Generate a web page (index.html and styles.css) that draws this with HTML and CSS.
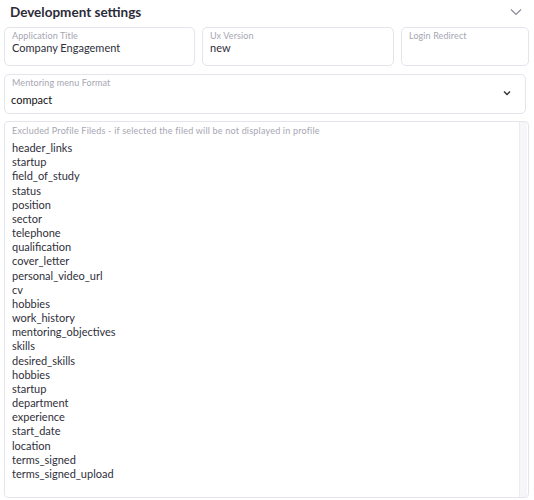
FILE: index.html
```html
<!DOCTYPE html>
<html>
<head>
<meta charset="utf-8">
<link rel="stylesheet" href="styles.css">
</head>
<body>
<div class="panel">
  <div class="header">
    <h2 class="title">Development settings</h2>
    <svg class="chev-lg" width="12" height="8" viewBox="0 0 12 8"><path d="M1 1.5 L6 6.5 L11 1.5" fill="none" stroke="#8a8a96" stroke-width="1.2"/></svg>
  </div>
  <div class="row">
    <div class="field f1"><div class="label">Application Title</div><div class="value">Company Engagement</div></div>
    <div class="field f2"><div class="label">Ux Version</div><div class="value">new</div></div>
    <div class="field f3"><div class="label">Login Redirect</div><div class="value"></div></div>
  </div>
  <div class="field select">
    <div class="sel-main">
      <div class="label">Mentoring menu Format</div>
      <div class="value dark">compact</div>
    </div>
    <svg class="chev-sm" width="8" height="6" viewBox="0 0 8 6"><path d="M1 1.5 L4 4.5 L7 1.5" fill="none" stroke="#333" stroke-width="1.4"/></svg>
  </div>
  <div class="field multi">
    <div class="multi-body">
      <div class="label wide">Excluded Profile Fileds - if selected the filed will be not displayed in profile</div>
      <ul class="list">
        <li>header_links</li>
        <li>startup</li>
        <li>field_of_study</li>
        <li>status</li>
        <li>position</li>
        <li>sector</li>
        <li>telephone</li>
        <li>qualification</li>
        <li>cover_letter</li>
        <li>personal_video_url</li>
        <li>cv</li>
        <li>hobbies</li>
        <li>work_history</li>
        <li>mentoring_objectives</li>
        <li>skills</li>
        <li>desired_skills</li>
        <li>hobbies</li>
        <li>startup</li>
        <li>department</li>
        <li>experience</li>
        <li>start_date</li>
        <li>location</li>
        <li>terms_signed</li>
        <li>terms_signed_upload</li>
      </ul>
    </div>
    <div class="scrollbar"></div>
  </div>
</div>
</body>
</html>
```
FILE: styles.css
```css
html, body {
  margin: 0;
  padding: 0;
  background: #ffffff;
}
body {
  font-family: "Lato", "Noto Sans", sans-serif;
  color: #2f2f3b;
}
.panel {
  width: 534px;
  padding: 0 6px 0 4px;
  box-sizing: border-box;
}
.header {
  display: flex;
  align-items: center;
  justify-content: space-between;
  height: 25px;
  padding: 0 6px 0 6px;
}
.title {
  margin: 0 0 2px 0;
  font-size: 13.5px;
  font-weight: 700;
  color: #2c2c38;
}
.chev-lg {
  margin-top: -1px;
}
.row {
  display: grid;
  grid-template-columns: 191px 192px 128px;
  column-gap: 7px;
  margin-top: 2px;
}
.field {
  border: 1px solid #e4e4ec;
  border-radius: 5px;
  box-sizing: border-box;
  padding: 2px 7px;
}
.row .field {
  height: 39px;
}
.label {
  font-size: 9px;
  color: #a6a6b2;
  line-height: 11px;
  letter-spacing: 0.1px;
}
.label.wide {
  letter-spacing: 0.2px;
}
.value {
  font-size: 11px;
  line-height: 14px;
  color: #2f2f3b;
  margin-top: 0;
}
.value.dark {
  color: #111;
  margin-top: 5px;
}
.select {
  margin-top: 8px;
  width: 522px;
  height: 40px;
  display: flex;
  align-items: center;
  justify-content: space-between;
  padding: 1px 14px 6px 6px;
}
.sel-main .label {
  padding-left: 1px;
}
.chev-sm {
  margin-top: 2px;
}
.multi {
  margin-top: 7px;
  width: 525px;
  height: 377px;
  padding: 0;
  display: flex;
  border-radius: 4px;
}
.multi-body {
  flex: 1;
  padding: 3px 7px;
}
.list {
  list-style: none;
  margin: 5px 0 0 0;
  padding: 0;
}
.list li {
  font-size: 11px;
  line-height: 14.17px;
  color: #2f2f3b;
}
.scrollbar {
  width: 7px;
  background: #f6f6f8;
  border-left: 1px solid #ececf0;
  margin: 0 1px 0 0;
}
```
